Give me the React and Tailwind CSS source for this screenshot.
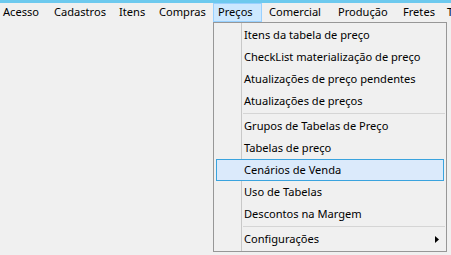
import React from "react";

const bar = [
  { t: "Acesso", w: "w-[47px]", pl: "pl-[2px]" },
  { t: "Cadastros", w: "w-[65px]", pl: "pl-[6px]" },
  { t: "Itens", w: "w-[40px]", pl: "pl-[6px]" },
  { t: "Compras", w: "w-[61px]", pl: "pl-[6px]" },
  { t: "Preços", w: "w-[49px]", pl: "pl-[4px]", active: true },
  { t: "Comercial", w: "w-[69px]", pl: "pl-[6px]" },
  { t: "Produção", w: "w-[65px]", pl: "pl-[6px]" },
  { t: "Fretes", w: "w-[44px]", pl: "pl-[6px]" },
  { t: "Tabelas", w: "w-[60px]", pl: "pl-[6px]" },
];

const group1 = [
  "Itens da tabela de preço",
  "CheckList materialização de preço",
  "Atualizações de preço pendentes",
  "Atualizações de preços",
];
const group2 = [
  "Grupos de Tabelas de Preço",
  "Tabelas de preço",
  "Cenários de Venda",
  "Uso de Tabelas",
  "Descontos na Margem",
];

function Item({ label, active, arrow }) {
  return (
    <div
      className={
        "relative mx-[2px] h-[22px] flex items-center pl-[27px] border " +
        (active ? "bg-[#dbeafb] border-[#3aa3de]" : "border-transparent")
      }
    >
      <span>{label}</span>
      {arrow && (
        <svg className="absolute left-[218px] top-[7px]" width="4" height="7" viewBox="0 0 4 7">
          <path d="M0 0 L4 3.5 L0 7 Z" fill="#000" />
        </svg>
      )}
    </div>
  );
}

function Sep() {
  return (
    <div className="h-[3px] flex items-center pl-[29px] pr-[1px]">
      <div className="h-px w-full bg-[#d5d5d5]" />
    </div>
  );
}

export default function App() {
  return (
    <div
      className="relative w-[451px] h-[255px] overflow-hidden bg-[#f0f0f0] text-[11.1px] text-black"
      style={{ fontFamily: '"Noto Sans", "Open Sans", sans-serif' }}
    >
      <div className="h-[3px] bg-[#6dc9ee]" />
      <div className="flex h-[19px] whitespace-nowrap">
        {bar.map((b) => (
          <div
            key={b.t}
            className={
              "shrink-0 flex items-center h-[19px] border " +
              b.w +
              " " +
              b.pl +
              " " +
              (b.active ? "bg-[#cce8ff] border-[#99d1ff]" : "border-transparent")
            }
          >
            {b.t}
          </div>
        ))}
      </div>

      <div className="absolute left-[213px] top-[22px] w-[234px] h-[230px] border border-[#979797] bg-[#f0f0f0] py-[1px] whitespace-nowrap">
        <div className="absolute left-[27px] top-0 bottom-0 w-px bg-[#c8c8c8]" />
        {group1.map((l) => (
          <Item key={l} label={l} />
        ))}
        <Sep />
        {group2.map((l) => (
          <Item key={l} label={l} active={l === "Cenários de Venda"} />
        ))}
        <Sep />
        <Item label="Configurações" arrow />
      </div>
    </div>
  );
}
